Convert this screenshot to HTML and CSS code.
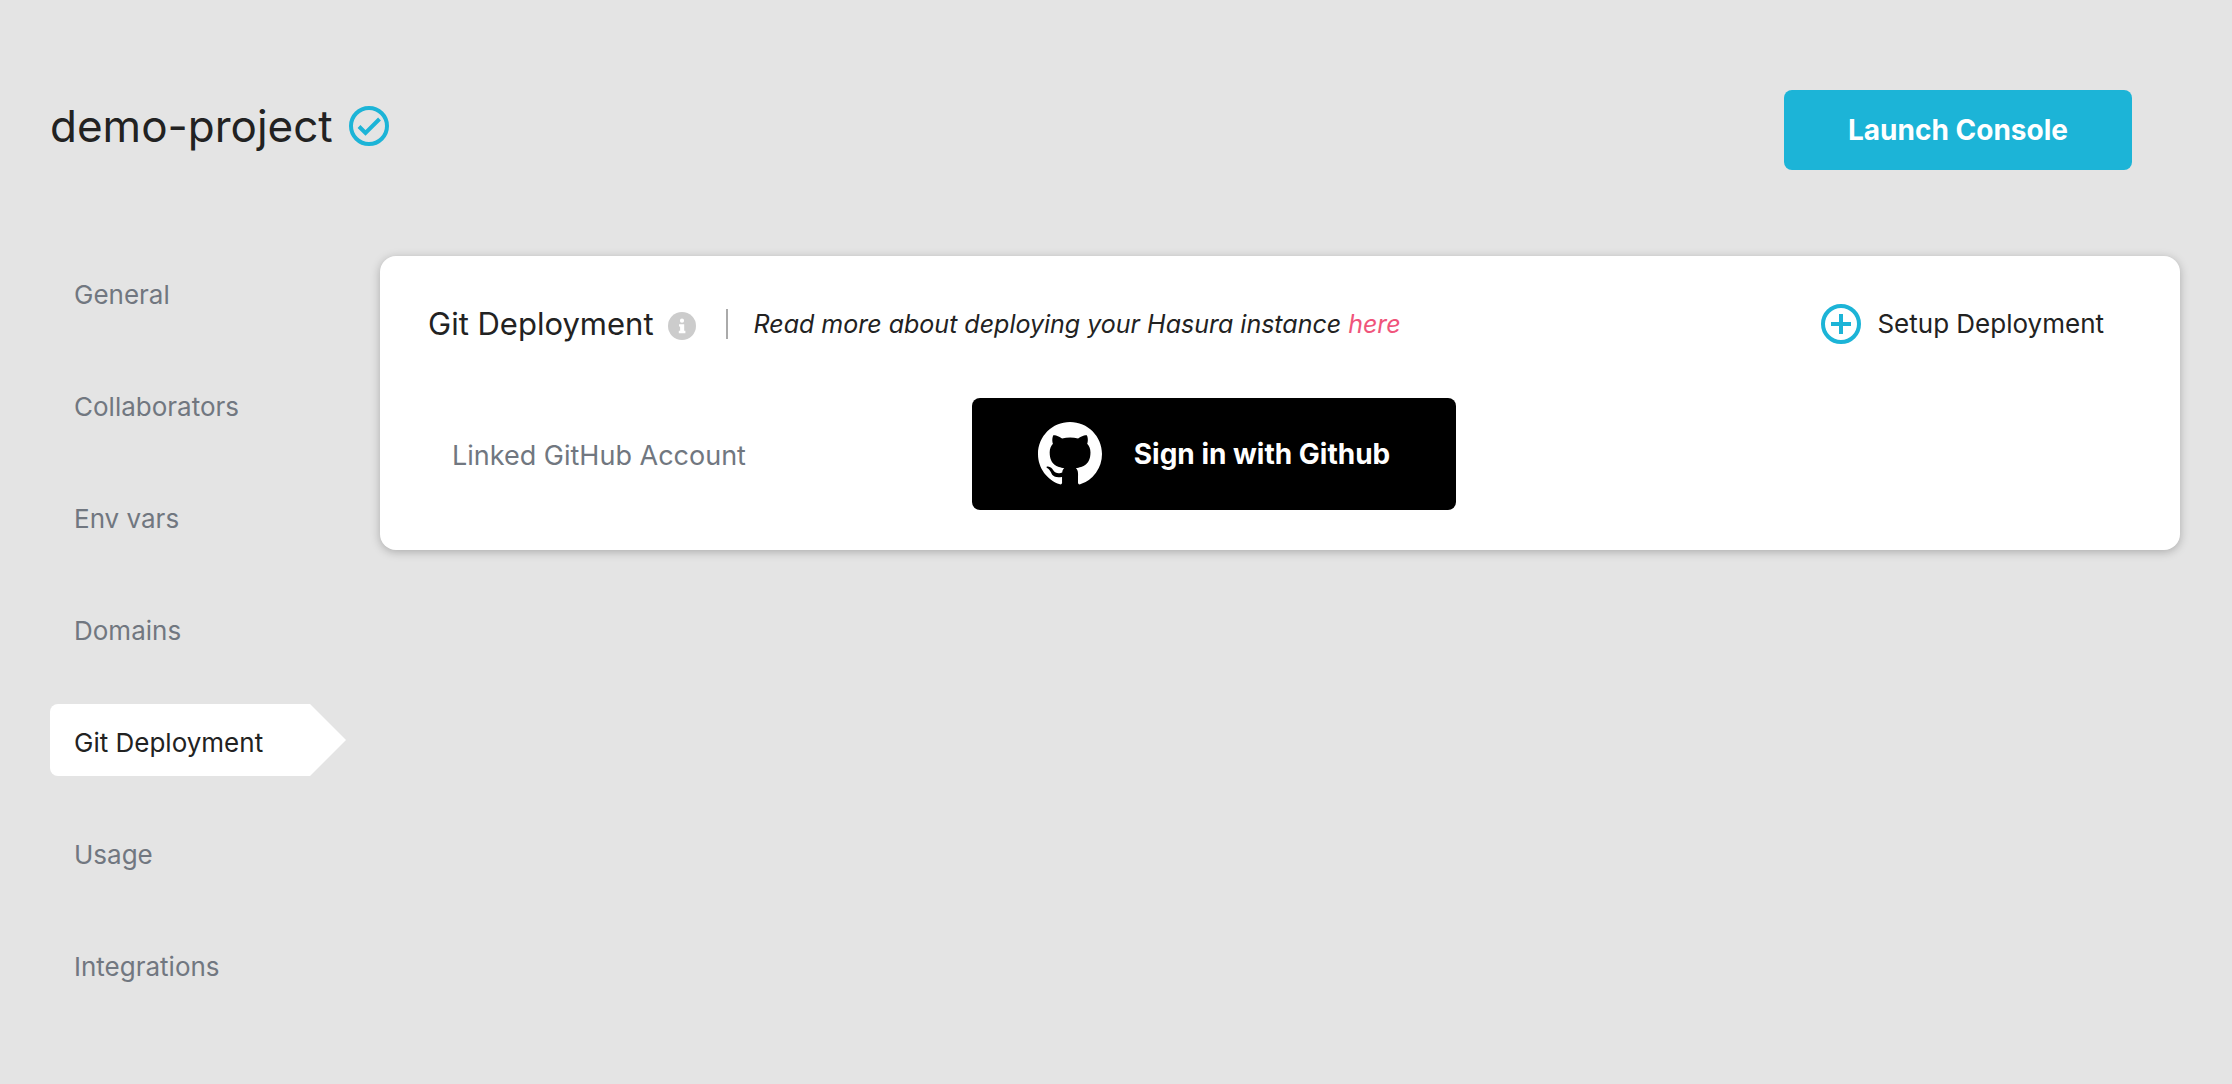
FILE: index.html
```html
<!DOCTYPE html>
<html lang="en">
<head>
<meta charset="utf-8">
<meta name="viewport" content="width=device-width, initial-scale=1">
<title>demo-project</title>
<link rel="stylesheet" href="styles.css">
</head>
<body>
<header class="page-header">
  <div class="project">
    <h1 class="project-name">demo-project</h1>
    <svg class="icon" viewBox="0 0 40 40" fill="none" stroke="currentColor" stroke-width="4" aria-label="Active"><circle cx="20" cy="20" r="18"/><path d="M10 20.500l6.500 6.500L30.500 13"/></svg>
  </div>
  <button class="launch" type="button">Launch Console</button>
</header>
<div class="layout">
  <nav class="side-nav" aria-label="Project settings">
    <a class="nav-item" href="#general">General</a>
    <a class="nav-item" href="#collaborators">Collaborators</a>
    <a class="nav-item" href="#env-vars">Env vars</a>
    <a class="nav-item" href="#domains">Domains</a>
    <a class="nav-item nav-item-active" href="#git-deployment" aria-current="page">Git Deployment</a>
    <a class="nav-item" href="#usage">Usage</a>
    <a class="nav-item" href="#integrations">Integrations</a>
  </nav>
  <main class="card">
    <div class="card-header">
      <h2 class="card-title">Git Deployment</h2>
      <svg class="info" viewBox="0 0 28 28" aria-label="Info"><circle cx="14" cy="14" r="14" fill="#ccc"/><path fill="#fff" d="M14 6.600a2.100 2.100 0 1 1 0 4.200a2.100 2.100 0 0 1 0-4.200zM11 12.200h5.200v6.600h1.200v2.400h-6.600v-2.400h1.300v-4.200H11z"/></svg>
      <p class="read-more">Read more about deploying your Hasura instance <a class="read-link" href="#docs">here</a></p>
      <button class="setup" type="button">
        <svg class="icon" viewBox="0 0 40 40" fill="none" stroke="currentColor" stroke-width="4" aria-hidden="true"><circle cx="20" cy="20" r="18"/><path d="M20 10v20M10 20h20"/></svg>
        <span class="setup-text">Setup Deployment</span>
      </button>
    </div>
    <div class="account-row">
      <span class="account-label">Linked GitHub Account</span>
      <button class="github" type="button">
        <svg class="github-logo" viewBox="0 0 16 16" fill="currentColor" aria-hidden="true"><path d="M8 0C3.580 0 0 3.580 0 8c0 3.540 2.290 6.530 5.470 7.590.4.070.55-.17.55-.38 0-.19-.01-.82-.01-1.490-2.010.37-2.530-.49-2.690-.94-.09-.23-.48-.94-.82-1.130-.28-.15-.68-.52-.01-.53.63-.01 1.080.58 1.230.82.72 1.210 1.870.87 2.330.66.07-.52.28-.87.51-1.070-1.780-.2-3.640-.89-3.640-3.950 0-.87.31-1.590.82-2.150-.08-.2-.36-1.020.08-2.120 0 0 .67-.21 2.200.82.64-.18 1.320-.27 2-.27s1.360.09 2 .27c1.530-1.040 2.200-.82 2.200-.82.44 1.100.16 1.920.08 2.120.51.56.82 1.270.82 2.150 0 3.070-1.870 3.750-3.650 3.950.29.25.54.73.54 1.480 0 1.070-.01 1.930-.01 2.200 0 .21.15.46.55.38A8.010 8.010 0 0 0 16 8c0-4.420-3.580-8-8-8z"/></svg>
        Sign in with Github
      </button>
    </div>
  </main>
</div>
</body>
</html>
```
FILE: styles.css
```css
* { box-sizing: border-box; }

body {
  margin: 0;
  min-height: 100vh;
  padding: 90px 52px 40px 50px;
  background: #e4e4e4;
  color: #222;
  font-family: Inter, "Liberation Sans", sans-serif;
  font-size: 27px;
  line-height: 40px;
}

h1, h2, p { margin: 0; font-weight: 400; }

button {
  border: 0;
  font: inherit;
  cursor: pointer;
}

a { text-decoration: none; }

.icon {
  flex: none;
  width: 40px;
  height: 40px;
  color: #1cb4d7;
}

.page-header {
  display: flex;
  justify-content: space-between;
  align-items: flex-start;
  padding-right: 48px;
}

.project {
  display: flex;
  align-items: center;
  gap: 16px;
}

.project-name {
  font-size: 44px;
  line-height: 72px;
}

.launch {
  width: 348px;
  height: 80px;
  border-radius: 8px;
  background: #1cb4d7;
  color: #fff;
  font-size: 28px;
  font-weight: 700;
}

.layout {
  display: grid;
  grid-template-columns: 296px 1fr;
  column-gap: 34px;
  align-items: start;
  margin-top: 86px;
}

.side-nav {
  display: flex;
  flex-direction: column;
  gap: 40px;
}

.nav-item {
  padding: 19px 24px 13px;
  color: #717780;
  font-size: 26px;
}

.nav-item-active {
  border-radius: 8px 0 0 8px;
  background: #fff;
  color: #222;
  clip-path: polygon(0 0, calc(100% - 36px) 0, 100% 50%, calc(100% - 36px) 100%, 0 100%);
}

.card {
  padding: 48px 76px 40px 48px;
  border-radius: 16px;
  background: #fff;
  box-shadow: 0 2px 10px rgba(0, 0, 0, 0.25);
}

.card-header {
  display: flex;
  align-items: center;
}

.card-title {
  font-size: 31px;
}

.info {
  width: 28px;
  height: 28px;
  margin: 4px 30px 0 14px;
}

.read-more {
  padding-left: 26px;
  border-left: 2px solid #aaa;
  font-size: 25px;
  font-style: italic;
  line-height: 30px;
}

.read-link { color: #f0547b; }

.setup {
  display: flex;
  align-items: center;
  gap: 16px;
  margin-left: auto;
  padding: 0;
  background: none;
  color: #222;
  font-size: 26px;
}

.account-row {
  display: grid;
  grid-template-columns: 520px auto;
  justify-content: start;
  align-items: center;
  margin-top: 54px;
  padding-left: 24px;
}

.account-label {
  padding-top: 4px;
  color: #717780;
}

.github {
  display: flex;
  align-items: center;
  justify-content: center;
  gap: 32px;
  width: 484px;
  height: 112px;
  border-radius: 8px;
  background: #000;
  color: #fff;
  font-size: 28px;
  font-weight: 700;
}

.github-logo {
  width: 64px;
  height: 64px;
}
```
